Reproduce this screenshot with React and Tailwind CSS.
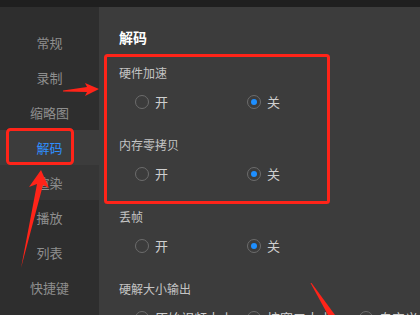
import React from "react";

const menu = ["常规", "录制", "缩略图", "解码", "渲染", "播放", "列表", "快捷键"];

const groups = [
  { label: "硬件加速", options: ["开", "关"], value: 1 },
  { label: "内存零拷贝", options: ["开", "关"], value: 1 },
  { label: "丢帧", options: ["开", "关"], value: 1 },
  { label: "硬解大小输出", options: ["原始视频大小", "按窗口大小", "自定义"], value: -1 },
];

function Radio({ checked, label }) {
  return (
    <div className="w-[112px] shrink-0 flex items-center h-5">
      <span className="w-[14px] h-[14px] shrink-0 rounded-full border-[1.5px] border-[#6c6c6c] flex items-center justify-center">
        {checked && <span className="w-[6px] h-[6px] rounded-full bg-[#1e8fff]" />}
      </span>
      <span className="ml-[6px] text-[13px] text-[#cfcfcf] leading-5 whitespace-nowrap">{label}</span>
    </div>
  );
}

export default function App() {
  return (
    <div
      className="relative w-[420px] h-[315px] overflow-hidden bg-[#3c3c3c]"
      style={{ fontFamily: '"Noto Sans CJK SC", "Noto Sans", sans-serif' }}
    >
      <div className="h-[7px] bg-[#1f1f1f]" />
      <div className="flex h-[308px]">
        <aside className="w-[99px] shrink-0 bg-[#2e2e2e] pt-[18px]">
          {menu.map((m) => (
            <div
              key={m}
              className={
                "h-[35px] flex items-center justify-center text-[13px] " +
                (m === "解码"
                  ? "bg-[#3c3c3c] text-[#2f8fff]"
                  : m === "渲染"
                  ? "bg-[#363636] text-[#8e8e8e]"
                  : "text-[#8e8e8e]")
              }
            >
              {m}
            </div>
          ))}
        </aside>
        <main className="flex-1 min-w-0 pl-5 pt-5 overflow-hidden">
          <h2 className="h-5 leading-5 text-[14px] font-bold text-white">解码</h2>
          <div className="mt-4">
            {groups.map((g) => (
              <div key={g.label} className="h-[72px]">
                <p className="h-5 leading-5 text-[12px] text-[#c4c4c4]">{g.label}</p>
                <div className="flex pl-4 mt-[9px]">
                  {g.options.map((o, i) => (
                    <Radio key={o} label={o} checked={i === g.value} />
                  ))}
                </div>
              </div>
            ))}
          </div>
        </main>
      </div>

      <svg className="absolute inset-0 pointer-events-none" width="420" height="315">
        <rect x="7.5" y="129.5" width="65" height="34" rx="3" fill="none" stroke="#ff2419" strokeWidth="3" />
        <rect x="105.5" y="55.5" width="223" height="147" rx="2" fill="none" stroke="#ff2419" strokeWidth="3" />
        <polygon points="63,90.5 87,87 85,83 99,89 85,96 87,92 63,91.5" fill="#ff2419" />
        <polygon points="41,170 49,188 43,185 21,268 37,184 29,187" fill="#ff2419" />
        <polygon points="310.5,283 311.5,283 335,315 328,315" fill="#ff2419" />
      </svg>
    </div>
  );
}
